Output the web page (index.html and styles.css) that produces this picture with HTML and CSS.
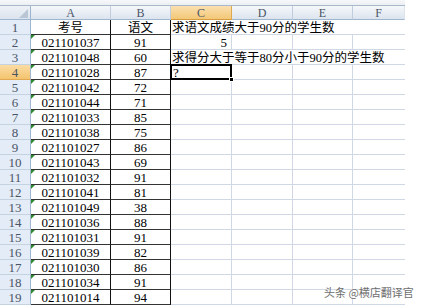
FILE: index.html
```html
<!DOCTYPE html>
<html>
<head>
<meta charset="utf-8">
<link rel="stylesheet" href="styles.css">
</head>
<body>
<div class="band"></div>
<div class="sheet">
  <div class="corner"><span class="tri"></span></div>
  <div class="ch">A</div><div class="ch">B</div><div class="ch sel">C</div><div class="ch">D</div><div class="ch">E</div><div class="ch last">F</div>

  <div class="rh">1</div><div class="a t"><span class="cjk">考号</span></div><div class="b t"><span class="cjk">语文</span></div><div class="c over"><span class="cjk">求语文成绩大于90分的学生数</span></div>
  <div class="rh">2</div><div class="a t g">021101037</div><div class="b t">91</div><div class="c num r">5</div><div class="c"></div><div class="c"></div><div class="c last"></div>
  <div class="rh">3</div><div class="a t g">021101048</div><div class="b t">60</div><div class="c over"><span class="cjk">求得分大于等于80分小于90分的学生数</span></div>
  <div class="rh sel">4</div><div class="a t g">021101028</div><div class="b t">87</div><div class="c active">?<span class="handle"></span></div><div class="c"></div><div class="c"></div><div class="c last"></div>
  <div class="rh">5</div><div class="a t g">021101042</div><div class="b t">72</div><div class="c"></div><div class="c"></div><div class="c"></div><div class="c last"></div>
  <div class="rh">6</div><div class="a t g">021101044</div><div class="b t">71</div><div class="c"></div><div class="c"></div><div class="c"></div><div class="c last"></div>
  <div class="rh">7</div><div class="a t g">021101033</div><div class="b t">85</div><div class="c"></div><div class="c"></div><div class="c"></div><div class="c last"></div>
  <div class="rh">8</div><div class="a t g">021101038</div><div class="b t">75</div><div class="c"></div><div class="c"></div><div class="c"></div><div class="c last"></div>
  <div class="rh">9</div><div class="a t g">021101027</div><div class="b t">86</div><div class="c"></div><div class="c"></div><div class="c"></div><div class="c last"></div>
  <div class="rh">10</div><div class="a t g">021101043</div><div class="b t">69</div><div class="c"></div><div class="c"></div><div class="c"></div><div class="c last"></div>
  <div class="rh">11</div><div class="a t g">021101032</div><div class="b t">91</div><div class="c"></div><div class="c"></div><div class="c"></div><div class="c last"></div>
  <div class="rh">12</div><div class="a t g">021101041</div><div class="b t">81</div><div class="c"></div><div class="c"></div><div class="c"></div><div class="c last"></div>
  <div class="rh">13</div><div class="a t g">021101049</div><div class="b t">38</div><div class="c"></div><div class="c"></div><div class="c"></div><div class="c last"></div>
  <div class="rh">14</div><div class="a t g">021101036</div><div class="b t">88</div><div class="c"></div><div class="c"></div><div class="c"></div><div class="c last"></div>
  <div class="rh">15</div><div class="a t g">021101031</div><div class="b t">91</div><div class="c"></div><div class="c"></div><div class="c"></div><div class="c last"></div>
  <div class="rh">16</div><div class="a t g">021101039</div><div class="b t">82</div><div class="c"></div><div class="c"></div><div class="c"></div><div class="c last"></div>
  <div class="rh">17</div><div class="a t g">021101030</div><div class="b t">86</div><div class="c"></div><div class="c"></div><div class="c"></div><div class="c last"></div>
  <div class="rh">18</div><div class="a t g">021101034</div><div class="b t">91</div><div class="c"></div><div class="c"></div><div class="c"></div><div class="c last"></div>
  <div class="rh">19</div><div class="a t g">021101014</div><div class="b t">94</div><div class="c"></div><div class="c"></div><div class="c"></div><div class="c last"></div>
</div>
<div class="watermark">头条 @横店翻译官</div>
</body>
</html>
```

FILE: styles.css
```css
html, body {
  margin: 0;
  padding: 0;
  background: #fff;
  width: 421px;
  height: 305px;
  overflow: hidden;
}
body {
  font-family: "Liberation Serif", "Noto Sans CJK SC", serif;
  font-size: 13px;
  color: #000;
}
.band {
  width: 405px;
  height: 6px;
  box-sizing: border-box;
  background: linear-gradient(#f7f8fa, #eceff3);
  border-bottom: 1px solid #a9b8ca;
}
.sheet {
  display: grid;
  grid-template-columns: 31px 80px 60px 61px 61px 60px 52px;
  grid-template-rows: 14px;
  grid-auto-rows: 15px;
  width: 405px;
}
.sheet > div {
  box-sizing: border-box;
  border-right: 1px solid #d0d7e5;
  border-bottom: 1px solid #d0d7e5;
  display: flex;
  align-items: center;
  white-space: nowrap;
  line-height: 14px;
  padding-top: 1px;
}
.corner {
  background: linear-gradient(#eef2f7, #dbe3ed);
  position: relative;
  border-right: 1px solid #9eb6ce !important;
  border-bottom: 1px solid #9eb6ce !important;
}
.tri {
  position: absolute;
  right: 2px;
  bottom: 1px;
  width: 0;
  height: 0;
  border-left: 9px solid transparent;
  border-bottom: 9px solid #b9c6d6;
}
.ch {
  justify-content: center;
  background: linear-gradient(#f5f8fb, #dce4ee);
  border-right: 1px solid #c0cddd !important;
  border-bottom: 1px solid #9eb6ce !important;
  color: #4a5566;
  font-size: 12px;
}
.ch.sel {
  background: linear-gradient(#fbe0b0, #f3c777);
  border-right-color: #e0a850 !important;
  border-bottom-color: #d69b3c !important;
}
.ch.last {
  border-right: 1px solid #dde4ec !important;
}
.rh {
  justify-content: center;
  background: #e4ecf7;
  border-right: 1px solid #9eb6ce !important;
  border-bottom: 1px solid #c5d2e0 !important;
  color: #4a5566;
  font-size: 13px;
}
.rh.sel {
  background: linear-gradient(#fbdca4, #f4c46e);
  border-bottom-color: #e0a850 !important;
}
.t {
  justify-content: center;
  border-right: 1px solid #111 !important;
  border-bottom: 1px solid #333 !important;
}
.a {
  position: relative;
}
.g::before {
  content: "";
  position: absolute;
  left: 0;
  top: 0;
  width: 0;
  height: 0;
  border-top: 4px solid #2f8a2f;
  border-right: 4px solid transparent;
}
.cjk {
  font-family: "Liberation Serif", "Noto Sans CJK SC", serif;
  font-size: 12.5px;
  line-height: 14px;
}
.c {
  padding-left: 2px;
}
.c.last {
  border-right: none !important;
}
.over {
  grid-column: span 4;
  border-right: none !important;
  padding-left: 1px;
}
.r {
  justify-content: flex-end;
  padding-right: 4px;
}
.active {
  position: relative;
  padding-left: 2px;
}
.active::after {
  content: "";
  position: absolute;
  left: -1px;
  top: -1px;
  right: -1px;
  bottom: -1px;
  border: 2px solid #000;
}
.handle {
  position: absolute;
  right: -3px;
  bottom: -3px;
  width: 5px;
  height: 5px;
  background: #000;
  border: 1px solid #fff;
  box-sizing: border-box;
  z-index: 2;
}
.watermark {
  position: absolute;
  left: 324px;
  top: 284px;
  font-family: "Noto Sans CJK SC", sans-serif;
  font-size: 11px;
  color: #6e6e6e;
  text-shadow: 0 0 2px #fff, 0 0 2px #fff;
  white-space: nowrap;
}
```
